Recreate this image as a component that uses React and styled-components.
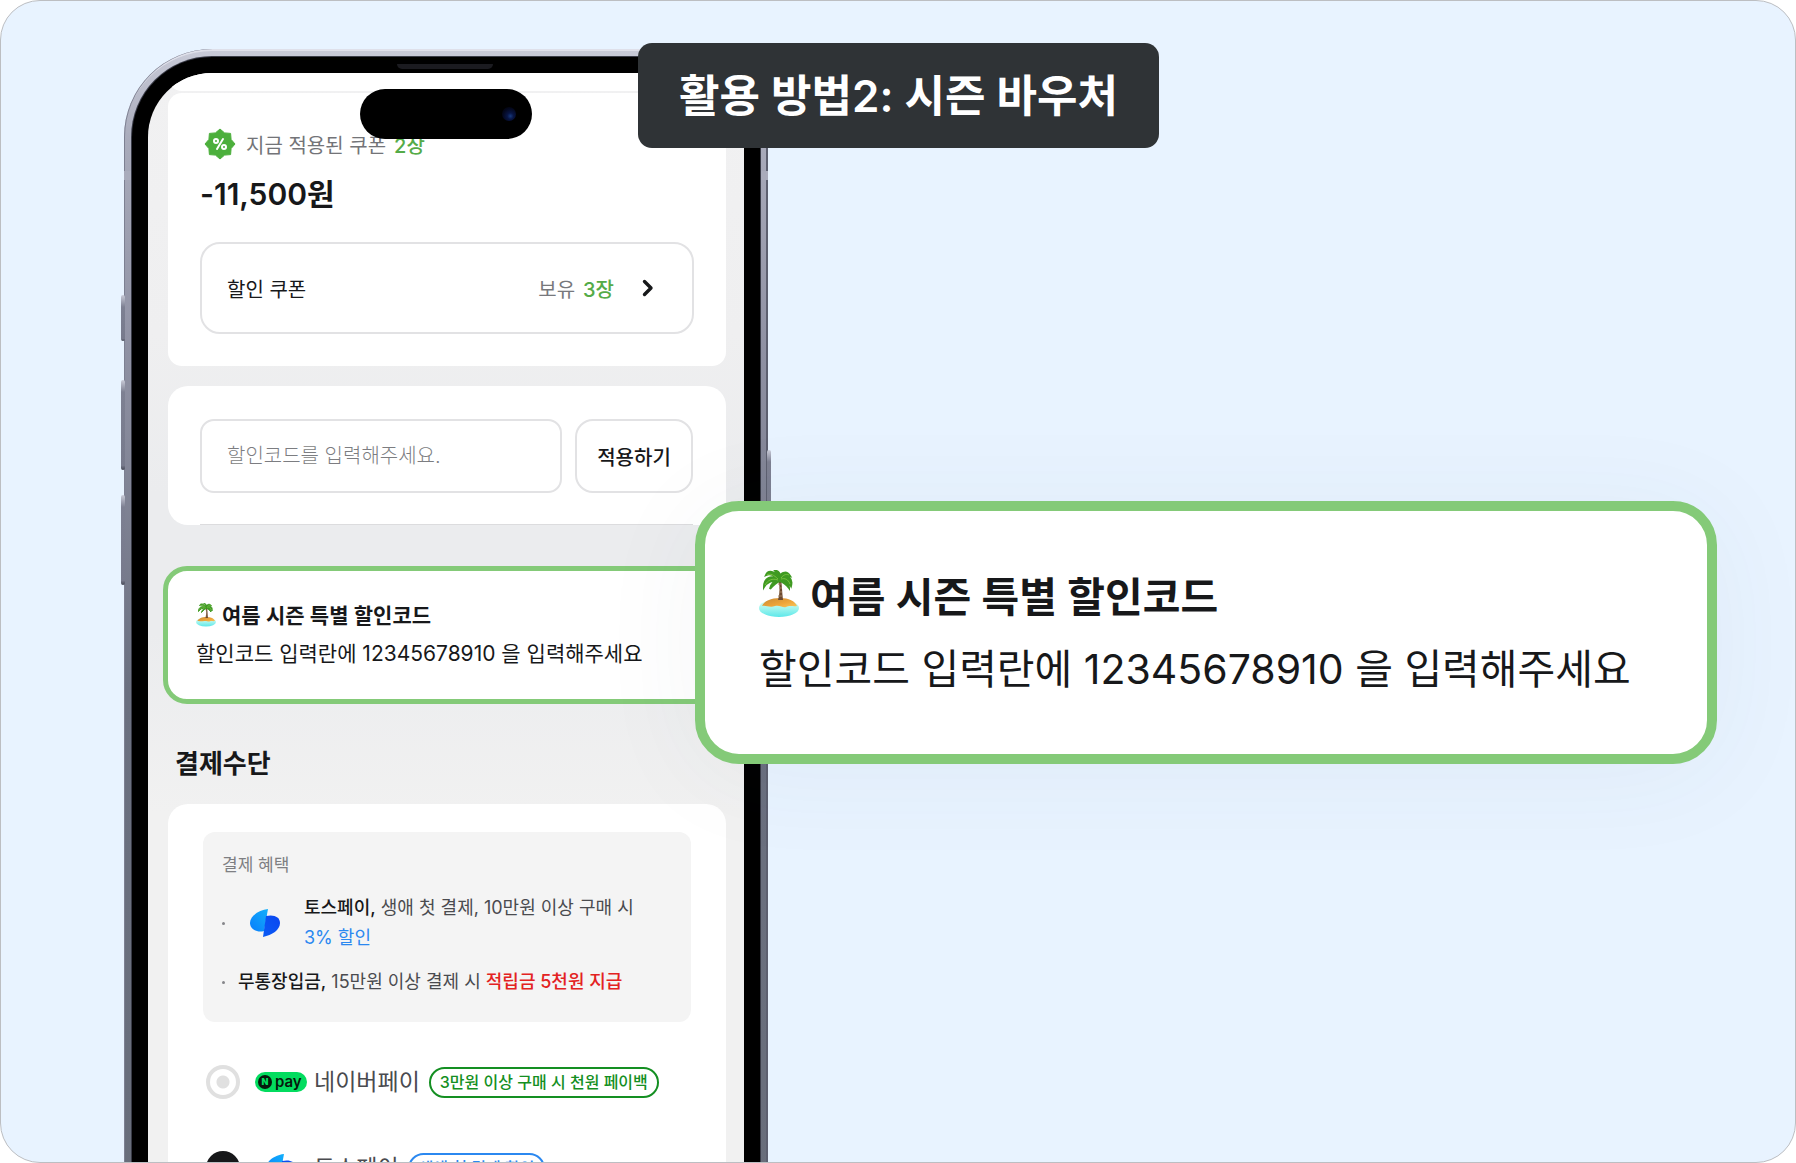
import React from "react";
import styled, { createGlobalStyle } from "styled-components";

const GlobalStyle = createGlobalStyle`
  *, *::before, *::after { box-sizing: border-box; }
  body {
    margin: 0;
    background: #fff;
    color: #17181a;
    font-family: Inter, "Noto Sans CJK KR", sans-serif;
  }
  button, input { font: inherit; color: inherit; }
  h1, h2, h3, p, ul { margin: 0; padding: 0; }
`;

const Frame = styled.main`
  position: relative;
  height: 100vh;
  overflow: hidden;
  padding: 48px 0 0 123px;
  border: 1px solid #bcbec2;
  border-radius: 40px;
  background: #e8f3ff;
`;

/* ---------- phone ---------- */

const Phone = styled.div`
  position: relative;
  width: 644px;
  padding: 8px;
  border-radius: 88px 88px 0 0;
  background: linear-gradient(#c9cbd8 0, #a9abbb 90px, #8f91a3 300px, #6b7080 640px, #686d7a 100%);
  box-shadow:
    inset 1px 0 0 #7d8092,
    inset 0 2px 0 #dfe0ea,
    inset -2px 0 0 #5d6070;
`;

const Bezel = styled.div`
  padding: 16px;
  border-radius: 80px 80px 0 0;
  background: #000;
  box-shadow: 0 0 0 1px #3a3c48;
`;

const Screen = styled.div`
  display: flex;
  flex-direction: column;
  padding: 0 18px 0 20px;
  overflow: hidden;
  border-radius: 64px 64px 0 0;
  background: linear-gradient(#f1f1f2 0, #efeff0 260px, #ebecee 420px, #ebecee 560px, #f1f1f1 740px);
`;

const SideKey = styled.span`
  position: absolute;
  top: ${(p) => p.$top}px;
  ${(p) => p.$side}: -3px;
  width: 4px;
  height: ${(p) => p.$length}px;
  border-radius: 2px;
  background: linear-gradient(#c9cbd8 0, #7d8092 12px, #777a8c 95%, #454855 100%);
`;

const Antenna = styled.span`
  position: absolute;
  top: 122px;
  ${(p) => p.$side}: 0;
  width: 7px;
  height: 9px;
  background: #a9abbb;
`;

const Speaker = styled.span`
  position: absolute;
  top: 15px;
  left: 273px;
  width: 96px;
  height: 5px;
  border-radius: 0 0 6px 6px;
  background: #1b1b20;
`;

const Island = styled.div`
  position: absolute;
  top: 40px;
  left: 236px;
  display: flex;
  align-items: center;
  justify-content: flex-end;
  width: 172px;
  height: 50px;
  padding-right: 16px;
  border-radius: 25px;
  background: #000;
`;

const Lens = styled.span`
  width: 14px;
  height: 14px;
  border-radius: 50%;
  background: radial-gradient(circle at 60% 65%, #17397c 0, #081544 25%, #04081e 60%, #000 100%);
`;

/* ---------- cards on the screen ---------- */

const PreviousCard = styled.div`
  height: 18px;
  margin-bottom: 2px;
  border-radius: 0 0 14px 14px;
  background: #fff;
`;

const Card = styled.section`
  margin-top: ${(p) => p.$gap || 0}px;
  padding: ${(p) => p.$pad};
  border-radius: ${(p) => p.$radius || 20}px;
  background: #fff;
`;

const Applied = styled.div`
  display: flex;
  align-items: center;
  height: 32px;
  padding-left: 4px;
  font-size: 20px;
  color: #737478;

  svg { margin-right: 10px; }
`;

const Green = styled.strong`
  margin-left: 8px;
  font-weight: 500;
  color: #55ab48;
`;

const Amount = styled.p`
  margin: 16px 0 30px;
  font-size: 30px;
  line-height: 36px;
  font-weight: 600;
`;

const CouponButton = styled.button`
  display: flex;
  align-items: center;
  width: 100%;
  height: 92px;
  padding: 0 38px 0 25px;
  border: 2px solid #e2e2e4;
  border-radius: 20px;
  background: #fff;
  font-size: 20px;
  cursor: pointer;

  svg { margin-left: 28px; }
`;

const CouponName = styled.span`
  margin-right: auto;
`;

const Held = styled.span`
  color: #77787c;
`;

const CodeForm = styled.form`
  display: flex;
  gap: 13px;
`;

const CodeInput = styled.input`
  flex: 1;
  min-width: 0;
  height: 74px;
  padding: 0 25px;
  border: 2px solid #e2e2e4;
  border-radius: 14px;
  background: #fff;
  font-size: 20px;
  font-weight: 300;

  &::placeholder { color: #7c7d81; opacity: 1; }
`;

const ApplyButton = styled.button`
  width: 118px;
  height: 74px;
  padding: 0;
  border: 2px solid #e2e2e4;
  border-radius: 18px;
  background: #fff;
  font-size: 20px;
  font-weight: 500;
  cursor: pointer;
`;

const Rule = styled.hr`
  height: 1px;
  margin: 31px 0 0;
  border: 0;
  background: #dcdcde;
`;

/* ---------- season voucher ---------- */

const Season = styled.section`
  display: flex;
  flex-direction: column;
  justify-content: center;
  border: solid #84ca78;
  background: #fff;
  color: #17181a;
  white-space: nowrap;

  ${(p) =>
    p.$large
      ? `
    position: absolute;
    top: 500px;
    left: 694px;
    right: 78px;
    height: 263px;
    padding: 0 54px;
    border-width: 10px;
    border-radius: 44px;
    font-size: 41px;
    line-height: 72px;
    box-shadow: 0 10px 110px rgba(60, 70, 100, 0.05);
  `
      : `
    height: 138px;
    margin: 41px -5px 0;
    padding: 0 28px;
    border-width: 5px;
    border-radius: 24px;
    font-size: 21px;
    line-height: 38px;
  `}
`;

const SeasonTitle = styled.h2`
  display: flex;
  align-items: center;
  gap: ${(p) => (p.$large ? 11 : 6)}px;
  font-size: inherit;
  font-weight: 600;

  svg { margin-bottom: ${(p) => (p.$large ? 6 : 3)}px; }
`;

const SectionTitle = styled.h2`
  margin: 40px 0 20px;
  padding-left: 7px;
  font-size: 26px;
  line-height: 40px;
  font-weight: 600;
`;

/* ---------- payment ---------- */

const Benefits = styled.div`
  height: 190px;
  margin: 0 3px;
  padding: 20px 19px;
  border-radius: 12px;
  background: #f4f4f4;
`;

const BenefitsLabel = styled.h3`
  font-size: 17px;
  line-height: 26px;
  font-weight: 400;
  color: #7e7f83;
`;

const BenefitList = styled.ul`
  display: flex;
  flex-direction: column;
  gap: 14px;
  margin-top: 15px;
  list-style: none;
  font-size: 18px;
  line-height: 30px;
  color: #4a4b4f;
  white-space: nowrap;
`;

const Benefit = styled.li`
  display: flex;
  align-items: center;

  &::before {
    content: "";
    width: 3px;
    height: 3px;
    margin-right: ${(p) => (p.$logo ? 24 : 13)}px;
    border-radius: 50%;
    background: #85868a;
  }

  svg { margin-right: 23px; }
`;

const Strong = styled.strong`
  font-weight: 500;
  color: ${(p) => p.$color || "#17181a"};
`;

const Blue = styled.span`
  color: #2b88f0;
`;

const Method = styled.label`
  display: flex;
  align-items: center;
  height: 40px;
  margin-top: ${(p) => p.$gap}px;
  padding-left: 6px;
  white-space: nowrap;
  cursor: pointer;
`;

const Radio = styled.input`
  appearance: none;
  width: 34px;
  height: 34px;
  margin: 0 15px 0 0;
  border: 4px solid #e0e0e0;
  border-radius: 50%;
  background: radial-gradient(circle, #e0e0e0 6px, #fff 7px);

  &:checked {
    border-color: #17181a;
    background: radial-gradient(circle, #fff 4px, #17181a 5px);
  }
`;

const LogoSlot = styled.span`
  display: flex;
  justify-content: center;
  width: 52px;
  margin-right: 7px;
`;

const Npay = styled.span`
  display: flex;
  align-items: center;
  gap: 3px;
  width: 52px;
  height: 20px;
  padding-left: 3px;
  border-radius: 10px;
  background: #03dc5f;
  color: #06180c;
  font-size: 15px;
  line-height: 16px;
  font-weight: 600;
`;

const NpayMark = styled.span`
  width: 14px;
  height: 14px;
  border-radius: 50%;
  background: #06180c;
  color: #03dc5f;
  font-size: 9px;
  line-height: 14px;
  font-weight: 900;
  text-align: center;
`;

const MethodName = styled.span`
  margin-right: 9px;
  font-size: 23px;
  line-height: 36px;
  color: #4a4b4f;
`;

const Badge = styled.span`
  height: 31px;
  padding: 0 9px;
  border: 2px solid ${(p) => p.$color};
  border-radius: 16px;
  color: ${(p) => p.$color};
  font-size: 16px;
  line-height: 27px;
  font-weight: 500;
`;

/* ---------- caption ---------- */

const Caption = styled.h1`
  position: absolute;
  top: 42px;
  left: 637px;
  padding: 1px 41px 0;
  border-radius: 14px;
  background: #2f3336;
  color: #fff;
  font-size: 44px;
  line-height: 104px;
  font-weight: 600;
  white-space: nowrap;
`;

/* ---------- drawings ---------- */

function CouponIcon() {
  const points = Array.from({ length: 16 }, (_, i) => {
    const r = i % 2 ? 12 : 15;
    const a = (i * Math.PI) / 8;
    return `${16 + r * Math.sin(a)},${16 - r * Math.cos(a)}`;
  }).join(" ");
  return (
    <svg width="32" height="32" viewBox="0 0 32 32" aria-hidden="true">
      <polygon points={points} fill="#4caf3c" stroke="#4caf3c" strokeWidth="1" strokeLinejoin="round" />
      <g fill="none" stroke="#fff" strokeWidth="2">
        <circle cx="12" cy="13" r="2" />
        <circle cx="20" cy="19" r="2" />
        <path d="M19 11 13 21" strokeLinecap="round" />
      </g>
    </svg>
  );
}

function Chevron() {
  return (
    <svg width="12" height="18" viewBox="0 0 12 18" aria-hidden="true">
      <path d="M2.5 2.5 9 9l-6.500 6.500" fill="none" stroke="#17181a" strokeWidth="3.400" strokeLinecap="round" strokeLinejoin="round" />
    </svg>
  );
}

function TossLogo({ id }) {
  return (
    <svg width="32" height="30" viewBox="0 0 32 30" aria-hidden="true">
      <defs>
        <linearGradient id={`${id}-a`} x1="0" y1="1" x2="1" y2="0">
          <stop offset="0" stopColor="#0a7dfb" />
          <stop offset="1" stopColor="#12b0fb" />
        </linearGradient>
        <linearGradient id={`${id}-b`} x1="0" y1="1" x2="1" y2="0">
          <stop offset="0" stopColor="#0a5cf5" />
          <stop offset="1" stopColor="#0a46f0" />
        </linearGradient>
      </defs>
      <path d="M19 1C10 2 1 8 1 15c0 6 7 10 14 8L19 1Z" fill={`url(#${id}-a)`} />
      <path d="M17 8c8-2 14 1 14 7 0 7-8 12-17 14L17 8Z" fill={`url(#${id}-b)`} />
    </svg>
  );
}

function IslandIcon({ id, size }) {
  return (
    <svg width={size} height={(size * 48) / 40} viewBox="0 0 40 48" aria-hidden="true">
      <defs>
        <linearGradient id={`${id}-sea`} x1="0" y1="0" x2="0" y2="1">
          <stop offset="0" stopColor="#e9fbf2" />
          <stop offset="0.500" stopColor="#a4f5ee" />
          <stop offset="1" stopColor="#5de8ea" />
        </linearGradient>
        <linearGradient id={`${id}-sand`} x1="0" y1="0" x2="1" y2="1">
          <stop offset="0" stopColor="#c98a35" />
          <stop offset="0.600" stopColor="#efa63a" />
          <stop offset="1" stopColor="#f9c65d" />
        </linearGradient>
      </defs>
      <ellipse cx="20" cy="38" rx="20" ry="9" fill={`url(#${id}-sea)`} />
      <path d="M3 36C5 31 12 28 21 28s15 3 17 8c-4 1-7-1-11 1-3 1-6-2-11-1-5 2-9-1-13 0Z" fill={`url(#${id}-sand)`} />
      <path d="M19 9c2 6 2 14 0 21h5c-1-8-1-15-2-21Z" fill="#6d4a30" />
      <path d="M19 14h3M20 18h3M20 22h3M19 26h4" stroke="#a88461" strokeWidth="1" />
      <path d="M20 8C16 1 9 0 7 5c4-2 8 0 12 4C12 5 5 8 5 17c3-5 8-7 14-7-4 1-7 4-8 9 4-5 7-7 10-8 3 1 6 3 9 7 0-5-3-8-6-9 4 0 6 3 8 7 2-8-3-11-10-9 4-3 6-2 9-1C28 1 23 2 21 6c0-3-2-5-6-6 3 2 4 4 5 8Z" fill="#3f9a22" stroke="#3f9a22" strokeWidth="2" />
      <path d="M19 9C15 5 11 3 8 5M19 10c-6-2-10 0-13 5M22 8c3-4 6-4 8-3M22 9c4-1 7 0 9 5" fill="none" stroke="#77c13e" strokeWidth="1" />
    </svg>
  );
}

/* ---------- content ---------- */

function SeasonVoucher({ large }) {
  return (
    <Season $large={large}>
      <SeasonTitle $large={large}>
        <IslandIcon id={large ? "isle-l" : "isle-s"} size={large ? 40 : 20} />
        여름 시즌 특별 할인코드
      </SeasonTitle>
      <p>할인코드 입력란에 12345678910 을 입력해주세요</p>
    </Season>
  );
}

export default function App() {
  return (
    <>
      <GlobalStyle />
      <Frame>
        <Phone>
          <SideKey $side="left" $top={246} $length={46} />
          <SideKey $side="left" $top={331} $length={90} />
          <SideKey $side="left" $top={446} $length={90} />
          <SideKey $side="right" $top={401} $length={140} />
          <Antenna $side="left" />
          <Antenna $side="right" />
          <Bezel>
            <Screen>
              <PreviousCard />
              <Card $pad="35px 32px 32px" $radius={14}>
                <Applied>
                  <CouponIcon />
                  지금 적용된 쿠폰 <Green>2장</Green>
                </Applied>
                <Amount>-11,500원</Amount>
                <CouponButton type="button">
                  <CouponName>할인 쿠폰</CouponName>
                  <Held>보유</Held>
                  <Green>3장</Green>
                  <Chevron />
                </CouponButton>
              </Card>
              <Card $gap={20} $pad="33px 33px 0 32px">
                <CodeForm onSubmit={(e) => e.preventDefault()}>
                  <CodeInput aria-label="할인코드" placeholder="할인코드를 입력해주세요." />
                  <ApplyButton type="submit">적용하기</ApplyButton>
                </CodeForm>
                <Rule />
              </Card>
              <SeasonVoucher />
              <SectionTitle>결제수단</SectionTitle>
              <Card $pad="28px 32px 48px">
                <Benefits>
                  <BenefitsLabel>결제 혜택</BenefitsLabel>
                  <BenefitList>
                    <Benefit $logo>
                      <TossLogo id="toss-benefit" />
                      <p>
                        <Strong>토스페이,</Strong> 생애 첫 결제, 10만원 이상 구매 시
                        <br />
                        <Blue>3% 할인</Blue>
                      </p>
                    </Benefit>
                    <Benefit>
                      <p>
                        <Strong>무통장입금,</Strong> 15만원 이상 결제 시 <Strong $color="#e32222">적립금 5천원 지급</Strong>
                      </p>
                    </Benefit>
                  </BenefitList>
                </Benefits>
                <Method $gap={40}>
                  <Radio type="radio" name="method" />
                  <LogoSlot>
                    <Npay>
                      <NpayMark>N</NpayMark>pay
                    </Npay>
                  </LogoSlot>
                  <MethodName>네이버페이</MethodName>
                  <Badge $color="#148f22">3만원 이상 구매 시 천원 페이백</Badge>
                </Method>
                <Method $gap={46}>
                  <Radio type="radio" name="method" defaultChecked />
                  <LogoSlot>
                    <TossLogo id="toss-method" />
                  </LogoSlot>
                  <MethodName>토스페이</MethodName>
                  <Badge $color="#2b88f0">생애 첫 결제 할인</Badge>
                </Method>
              </Card>
            </Screen>
          </Bezel>
          <Speaker />
          <Island>
            <Lens />
          </Island>
        </Phone>
        <SeasonVoucher large />
        <Caption>활용 방법2: 시즌 바우처</Caption>
      </Frame>
    </>
  );
}
